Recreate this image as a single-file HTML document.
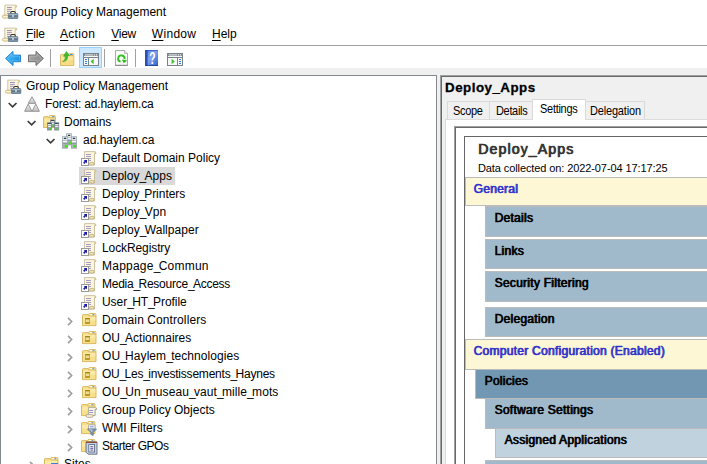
<!DOCTYPE html>
<html><head><meta charset="utf-8">
<style>
*{box-sizing:border-box;margin:0;padding:0}
html,body{width:707px;height:464px;overflow:hidden;background:#fff}
body{font-family:"Liberation Sans",sans-serif;font-size:12px;color:#000;position:relative}
.abs{position:absolute}
svg{overflow:visible}
.t{position:absolute;white-space:nowrap;line-height:18px;height:18px}
.menu{top:25px}
.menu u{text-decoration:underline;text-underline-offset:1.6px;text-decoration-thickness:1px}
.sel{left:79px;top:167px;width:96px;height:18px;background:#d9d9d9}
.us{letter-spacing:-1.7px}
.fb{font-weight:400;text-shadow:0.7px 0 0 currentColor;-webkit-text-stroke:0.35px currentColor;letter-spacing:.27px}
.band{position:absolute;border:1px solid #bbb}
.tab{position:absolute;background:#f0f0f0;border:1px solid #d9d9d9;border-bottom:none}
.sep{position:absolute;top:49px;width:1px;height:18px;background:#a0a0a0}
</style></head><body>
<svg class="abs" style="left:2px;top:4px" width="16" height="15" viewBox="0 0 16 15" >
<path d="M2.8 1.1H12.8Q15.1 .7 14.8 3H13.1V11.6H2.8Z" fill="#fdf6dc" stroke="#c2b795" stroke-width=".8"/>
<path d="M13.1 1.4Q14.7 1.2 14.5 2.8H13.1Z" fill="#d9c478"/>
<path d="M5 3.5H9.9M5 5.4H9.9M5 7.3H8.4M5 9.3H7" stroke="#9488bc" stroke-width=".9"/>
<rect x=".4" y="11.2" width="6.6" height="2.9" rx="1.4" fill="#f6e9b2" stroke="#c4b070" stroke-width=".8"/>
<path d="M1.4 12.6H6" stroke="#fffbe8" stroke-width=".8"/>
<path d="M8.7 9.7V8.7Q8.7 7.5 9.9 7.5H12.1Q13.3 7.5 13.3 8.7V9.7" fill="none" stroke="#2b2b2b" stroke-width="1.1"/>
<rect x="6.4" y="9.6" width="9.4" height="4.9" rx=".5" fill="#7f95a8" stroke="#5d7488" stroke-width=".8"/>
<rect x="6.8" y="10" width="8.6" height="1.2" fill="#a3b6c4"/>
<rect x="6.8" y="11.6" width="8.6" height="1" fill="#4d6072"/>
<rect x="10.4" y="10.8" width="1.2" height="2.2" fill="#f4f6f7"/>
</svg>
<div class="t" style="left:24px;top:3px">Group Policy Management</div>
<svg class="abs" style="left:2px;top:27px" width="16" height="15" viewBox="0 0 16 15" >
<path d="M2.8 1.1H12.8Q15.1 .7 14.8 3H13.1V11.6H2.8Z" fill="#fdf6dc" stroke="#c2b795" stroke-width=".8"/>
<path d="M13.1 1.4Q14.7 1.2 14.5 2.8H13.1Z" fill="#d9c478"/>
<path d="M5 3.5H9.9M5 5.4H9.9M5 7.3H8.4M5 9.3H7" stroke="#9488bc" stroke-width=".9"/>
<rect x=".4" y="11.2" width="6.6" height="2.9" rx="1.4" fill="#f6e9b2" stroke="#c4b070" stroke-width=".8"/>
<path d="M1.4 12.6H6" stroke="#fffbe8" stroke-width=".8"/>
<path d="M8.7 9.7V8.7Q8.7 7.5 9.9 7.5H12.1Q13.3 7.5 13.3 8.7V9.7" fill="none" stroke="#2b2b2b" stroke-width="1.1"/>
<rect x="6.4" y="9.6" width="9.4" height="4.9" rx=".5" fill="#7f95a8" stroke="#5d7488" stroke-width=".8"/>
<rect x="6.8" y="10" width="8.6" height="1.2" fill="#a3b6c4"/>
<rect x="6.8" y="11.6" width="8.6" height="1" fill="#4d6072"/>
<rect x="10.4" y="10.8" width="1.2" height="2.2" fill="#f4f6f7"/>
</svg>
<div class="t menu" style="left:26px;letter-spacing:-0.15px"><u>F</u>ile</div>
<div class="t menu" style="left:60px;letter-spacing:0.3px"><u>A</u>ction</div>
<div class="t menu" style="left:111.3px;letter-spacing:-0.3px"><u>V</u>iew</div>
<div class="t menu" style="left:151.8px;letter-spacing:0.3px"><u>W</u>indow</div>
<div class="t menu" style="left:212px;letter-spacing:0px"><u>H</u>elp</div>
<div class="abs" style="left:0;top:45px;width:707px;height:1px;background:#a0a0a0"></div>
<div class="abs" style="left:0;top:68px;width:707px;height:396px;background:#f0f0f0"></div>
<div class="abs" style="left:79px;top:47px;width:23px;height:21px;background:#cce8ff;border:1px solid #99d1ff"></div>
<svg class="abs" style="left:4.5px;top:51px" width="17" height="15" viewBox="0 0 17 15" ><defs><linearGradient id="gb" x1="0" y1="0" x2="1" y2="1"><stop offset="0" stop-color="#5cc4f8"/><stop offset=".5" stop-color="#34a8f0"/><stop offset="1" stop-color="#0c74d4"/></linearGradient></defs>
<path d="M.6 7.4L8 .3V4.1H15.5V10.7H8V14.5Z" fill="url(#gb)" stroke="#2584d4" stroke-width="1" stroke-linejoin="round"/>
<path d="M2.2 7.4L7 2.8V5.1H14.5V9.7H7V12Z" fill="none" stroke="#8ad4fb" stroke-width=".6" opacity=".7"/></svg>
<svg class="abs" style="left:27px;top:51px" width="17" height="15" viewBox="0 0 17 15" ><defs><linearGradient id="gg" x1="0" y1="0" x2="1" y2="1"><stop offset="0" stop-color="#b8b8b8"/><stop offset=".5" stop-color="#969696"/><stop offset="1" stop-color="#8c8c8c"/></linearGradient></defs>
<path d="M16.4 7.4L9 .3V4.1H1.5V10.7H9V14.5Z" fill="url(#gg)" stroke="#6c6c6c" stroke-width="1" stroke-linejoin="round"/>
<path d="M14.8 7.4L10 2.8V5.1H2.5V9.7H10V12Z" fill="none" stroke="#c8c8c8" stroke-width=".6" opacity=".7"/></svg>
<div class="sep" style="left:50px"></div>
<svg class="abs" style="left:60px;top:51px" width="15" height="15" viewBox="0 0 15 15" ><path d="M8.5 3.2Q8.5 2.4 9.4 2.4H12.8Q13.7 2.4 13.7 3.2V5H8.5Z" fill="#fbe9a7" stroke="#d9b75a" stroke-width=".8"/>
<rect x="10" y="3" width="2.6" height="1" fill="#3b8be6"/>
<path d="M.5 4.2Q.5 3.4 1.4 3.4H6.6L7.8 4.6H13Q13.8 4.6 13.8 5.4V14.5H.5Z" fill="#f7dc85" stroke="#d3ae4e" stroke-width=".8"/>
<path d="M1.2 5.4H13.2V9H1.2Z" fill="#fbe9a9" opacity=".7"/>
<path d="M2.6 10.6Q5.6 9.6 5.4 5.2H3.6L6.4 .6L9.4 4.6H7.6Q8 10.4 2.6 10.6Z" fill="#3fc02a" stroke="#2e9a1e" stroke-width=".6" stroke-linejoin="round"/></svg>
<svg class="abs" style="left:83px;top:53px" width="16" height="13" viewBox="0 0 16 13" ><rect x=".5" y=".5" width="15" height="12" fill="#f6f7f8" stroke="#7a828a" stroke-width="1"/>
<rect x="1" y="1" width="14" height="2" fill="#8a9198"/>
<rect x="11" y="1.4" width="1" height="1" fill="#fff"/><rect x="13" y="1.4" width="1" height="1" fill="#fff"/>
<rect x="2" y="1.4" width="8" height="1" fill="#dfe3e6"/>
<path d="M.5 4.5H15.5M5.5 4.5V12.5" stroke="#7a828a" stroke-width="1"/>
<path d="M2 6.5H4M2 8.5H4M2 10.5H4" stroke="#2f7fd8" stroke-width="1"/>
<path d="M10.6 5.8V11.2L7.6 8.5Z" fill="#3fc02a"/></svg>
<div class="sep" style="left:104px"></div>
<svg class="abs" style="left:115px;top:50px" width="13" height="16" viewBox="0 0 13 16" ><path d="M.5 .5H9.6L12.5 3.4V15.3H.5Z" fill="#fcfcfc" stroke="#9e9e9e" stroke-width=".9"/>
<path d="M.3 15.4H12.7" stroke="#7c7c7c" stroke-width=".8"/>
<path d="M9.6 .5V3.4H12.5" fill="#f0f0f0" stroke="#a8a8a8" stroke-width=".8"/>
<path d="M5.6 11.7A3.2 3.2 0 1 1 9.5 9.2" fill="none" stroke="#35c022" stroke-width="1.9"/>
<path d="M6.9 9.6L12.2 10.4L8.7 13.3Z" fill="#2eb81e"/></svg>
<div class="sep" style="left:135px"></div>
<svg class="abs" style="left:145px;top:50px" width="13" height="16" viewBox="0 0 13 16" ><defs><linearGradient id="gh" x1="0" y1="0" x2="1" y2="1"><stop offset="0" stop-color="#4a7ade"/><stop offset=".45" stop-color="#7ea4ee"/><stop offset="1" stop-color="#2f5cc4"/></linearGradient></defs>
<rect x="0" y="0" width="13" height="16" fill="url(#gh)"/><rect x="0" y="0" width="2.6" height="16" fill="#2c50b8"/>
<rect x="0" y="15.2" width="13" height=".8" fill="#24408c"/><rect x="0" y="0" width="13" height=".7" fill="#2c50b8"/>
<text transform="translate(7.5 13.6) scale(.62 1)" text-anchor="middle" font-family="Liberation Sans, sans-serif" font-weight="700" font-size="16.6" fill="#fff">?</text></svg>
<svg class="abs" style="left:167px;top:53px" width="16" height="13" viewBox="0 0 16 13" ><rect x=".5" y=".5" width="15" height="12" fill="#f6f7f8" stroke="#7a828a" stroke-width="1"/>
<rect x="1" y="1" width="14" height="2" fill="#8a9198"/>
<rect x="11" y="1.4" width="1" height="1" fill="#fff"/><rect x="13" y="1.4" width="1" height="1" fill="#fff"/>
<rect x="2" y="1.4" width="8" height="1" fill="#dfe3e6"/>
<path d="M.5 4.5H15.5M10.5 4.5V12.5" stroke="#7a828a" stroke-width="1"/>
<path d="M12 6.5H14M12 8.5H14M12 10.5H14" stroke="#2f7fd8" stroke-width="1"/>
<path d="M4.6 5.8V11.2L7.8 8.5Z" fill="#3fc02a"/></svg>
<div class="abs" style="left:0px;top:75px;width:437px;height:395px;background:#fff;border:1px solid #828790"></div>
<div class="abs sel"></div>
<svg class="abs" style="left:5px;top:79px" width="16" height="15" viewBox="0 0 16 15" >
<path d="M2.8 1.1H12.8Q15.1 .7 14.8 3H13.1V11.6H2.8Z" fill="#fdf6dc" stroke="#c2b795" stroke-width=".8"/>
<path d="M13.1 1.4Q14.7 1.2 14.5 2.8H13.1Z" fill="#d9c478"/>
<path d="M5 3.5H9.9M5 5.4H9.9M5 7.3H8.4M5 9.3H7" stroke="#9488bc" stroke-width=".9"/>
<rect x=".4" y="11.2" width="6.6" height="2.9" rx="1.4" fill="#f6e9b2" stroke="#c4b070" stroke-width=".8"/>
<path d="M1.4 12.6H6" stroke="#fffbe8" stroke-width=".8"/>
<path d="M8.7 9.7V8.7Q8.7 7.5 9.9 7.5H12.1Q13.3 7.5 13.3 8.7V9.7" fill="none" stroke="#2b2b2b" stroke-width="1.1"/>
<rect x="6.4" y="9.6" width="9.4" height="4.9" rx=".5" fill="#7f95a8" stroke="#5d7488" stroke-width=".8"/>
<rect x="6.8" y="10" width="8.6" height="1.2" fill="#a3b6c4"/>
<rect x="6.8" y="11.6" width="8.6" height="1" fill="#4d6072"/>
<rect x="10.4" y="10.8" width="1.2" height="2.2" fill="#f4f6f7"/>
</svg>
<div class="t" style="left:26px;top:77px">Group Policy Management</div>
<svg class="abs" style="left:24px;top:96px" width="16" height="16" viewBox="0 0 16 16" ><defs><linearGradient id="gt" x1="0" y1="0" x2="0" y2="1"><stop offset="0" stop-color="#f4f4f4"/><stop offset="1" stop-color="#bcbcbc"/></linearGradient></defs>
<path d="M8 .7L11.8 7.4H4.2Z" fill="url(#gt)" stroke="#8e8e8e" stroke-width=".9" stroke-linejoin="round"/>
<path d="M4.2 8L7.9 15.3H.6Z" fill="url(#gt)" stroke="#8e8e8e" stroke-width=".9" stroke-linejoin="round"/>
<path d="M11.8 8L15.4 15.3H8.1Z" fill="url(#gt)" stroke="#8e8e8e" stroke-width=".9" stroke-linejoin="round"/>
</svg>
<svg class="abs" style="left:7.5px;top:101.6px" width="10" height="7" viewBox="0 0 10 7" ><path d="M.7 1L4.6 4.9L8.5 1" fill="none" stroke="#3c3c3c" stroke-width="1.7"/></svg>
<div class="t" style="left:45px;top:95px;letter-spacing:-0.18px">Forest: ad.haylem.ca</div>
<svg class="abs" style="left:43px;top:114.5px" width="16" height="16" viewBox="0 0 16 16" ><path d="M6 1.2Q6 .5 7 .5H11.4Q12.4 .5 12.4 1.4V4H6Z" fill="#fbe9a7" stroke="#d9b75a" stroke-width=".8"/>
<rect x="9" y="1.2" width="2.4" height="1.1" fill="#3b8be6"/>
<path d="M.5 2.4Q.5 1.6 1.4 1.6H5L6.2 2.8H11.6Q12.4 2.8 12.4 3.6V12.5H.5Z" fill="#f7dc85" stroke="#d3ae4e" stroke-width=".8"/>
<path d="M1.2 3.6H11.8V8H1.2Z" fill="#fbe9a9" opacity=".8"/><rect x="7.6" y="4.8999999999999995" width="3.9" height="7.0" fill="#8f9ba6" stroke="#76828c" stroke-width=".6"/>
<rect x="7.8" y="5.0" width="3.5" height="1" fill="#33485a"/>
<rect x="8.2" y="6.199999999999999" width="2.7" height="1.1" fill="#f2f5f7"/>
<rect x="8.2" y="8.1" width="2.7" height="1.1" fill="#eef1f4"/>
<rect x="9.3" y="9.7" width="1.6" height="1.6" fill="#3fe01c"/><rect x="4.3999999999999995" y="7.8" width="4.2" height="7.300000000000001" fill="#8f9ba6" stroke="#76828c" stroke-width=".6"/>
<rect x="4.6" y="7.9" width="3.8" height="1" fill="#33485a"/>
<rect x="5.0" y="9.1" width="3.0" height="1.1" fill="#f2f5f7"/>
<rect x="5.0" y="11.0" width="3.0" height="1.1" fill="#eef1f4"/>
<rect x="6.399999999999999" y="12.9" width="1.6" height="1.6" fill="#3fe01c"/><rect x="11.600000000000001" y="7.8" width="4.2" height="7.300000000000001" fill="#8f9ba6" stroke="#76828c" stroke-width=".6"/>
<rect x="11.8" y="7.9" width="3.8" height="1" fill="#33485a"/>
<rect x="12.200000000000001" y="9.1" width="3.0" height="1.1" fill="#f2f5f7"/>
<rect x="12.200000000000001" y="11.0" width="3.0" height="1.1" fill="#eef1f4"/>
<rect x="13.600000000000001" y="12.9" width="1.6" height="1.6" fill="#3fe01c"/></svg>
<svg class="abs" style="left:26.5px;top:119.6px" width="10" height="7" viewBox="0 0 10 7" ><path d="M.7 1L4.6 4.9L8.5 1" fill="none" stroke="#3c3c3c" stroke-width="1.7"/></svg>
<div class="t" style="left:64px;top:113px">Domains</div>
<svg class="abs" style="left:62px;top:132.5px" width="16" height="16" viewBox="0 0 16 16" ><rect x="4.5" y="0.8" width="5.2" height="11.200000000000001" fill="#a9b3bb" stroke="#8a949d" stroke-width=".6"/>
<rect x="4.9" y="1.2" width="4.4" height="2.8" fill="#e4e9ed"/>
<rect x="5.9" y="1.8" width="2.4" height="1.2" rx=".6" fill="#1d3b4c"/>
<rect x="5.1000000000000005" y="4.8" width="4.0" height="1.5" fill="#f6f8fa"/>
<rect x="5.1000000000000005" y="7.1" width="4.0" height=".7" fill="#848f98"/><rect x="6.6" y="8.700000000000001" width="2.4" height="2.6" fill="#46dc1c"/><rect x="0.4" y="3.8" width="5.4" height="11.4" fill="#a9b3bb" stroke="#8a949d" stroke-width=".6"/>
<rect x="0.7999999999999999" y="4.2" width="4.6" height="2.8" fill="#e4e9ed"/>
<rect x="1.8" y="4.8" width="2.6" height="1.2" rx=".6" fill="#1d3b4c"/>
<rect x="1.0" y="7.8" width="4.2" height="1.5" fill="#f6f8fa"/>
<rect x="1.0" y="10.1" width="4.2" height=".7" fill="#848f98"/><rect x="2.6999999999999997" y="11.9" width="2.4" height="2.6" fill="#46dc1c"/><rect x="9.3" y="3.8" width="5.4" height="11.4" fill="#a9b3bb" stroke="#8a949d" stroke-width=".6"/>
<rect x="9.7" y="4.2" width="4.6" height="2.8" fill="#e4e9ed"/>
<rect x="10.7" y="4.8" width="2.6" height="1.2" rx=".6" fill="#1d3b4c"/>
<rect x="9.9" y="7.8" width="4.2" height="1.5" fill="#f6f8fa"/>
<rect x="9.9" y="10.1" width="4.2" height=".7" fill="#848f98"/><rect x="11.6" y="11.9" width="2.4" height="2.6" fill="#46dc1c"/></svg>
<svg class="abs" style="left:45.5px;top:137.6px" width="10" height="7" viewBox="0 0 10 7" ><path d="M.7 1L4.6 4.9L8.5 1" fill="none" stroke="#3c3c3c" stroke-width="1.7"/></svg>
<div class="t" style="left:83px;top:131px">ad.haylem.ca</div>
<svg class="abs" style="left:81px;top:150px" width="16" height="16" viewBox="0 0 16 16" >
<path d="M3.5 1.6H13Q15.3 1.2 14.9 3.7H13.5V15H7" fill="#fdf6dc" stroke="#bfb493" stroke-width=".8"/>
<path d="M3.5 1.6V9" stroke="#bfb493" stroke-width=".8"/>
<path d="M13.5 1.9Q14.9 1.8 14.6 3.4H13.5Z" fill="#d4bd6c"/>
<path d="M5 4.5H10M5 6.5H10M5 8.5H10M8 10.5H10" stroke="#9890c4" stroke-width=".9"/>
<rect x="8.6" y="12.4" width="4.4" height="2.7" rx="1.2" fill="#f3e4ac" stroke="#b9a772" stroke-width=".8"/>
<rect x=".5" y="8.5" width="7" height="7" fill="#fff" stroke="#9a9a9a" stroke-width="1"/>
<path d="M2.6 10H6V13.4L4.9 12.3L3.3 13.9L2.1 12.7L3.7 11.1Z" fill="#1f1f9e"/>
</svg>
<div class="t" style="left:102px;top:149px">Default Domain Policy</div>
<svg class="abs" style="left:81px;top:168px" width="16" height="16" viewBox="0 0 16 16" >
<path d="M3.5 1.6H13Q15.3 1.2 14.9 3.7H13.5V15H7" fill="#fdf6dc" stroke="#bfb493" stroke-width=".8"/>
<path d="M3.5 1.6V9" stroke="#bfb493" stroke-width=".8"/>
<path d="M13.5 1.9Q14.9 1.8 14.6 3.4H13.5Z" fill="#d4bd6c"/>
<path d="M5 4.5H10M5 6.5H10M5 8.5H10M8 10.5H10" stroke="#9890c4" stroke-width=".9"/>
<rect x="8.6" y="12.4" width="4.4" height="2.7" rx="1.2" fill="#f3e4ac" stroke="#b9a772" stroke-width=".8"/>
<rect x=".5" y="8.5" width="7" height="7" fill="#fff" stroke="#9a9a9a" stroke-width="1"/>
<path d="M2.6 10H6V13.4L4.9 12.3L3.3 13.9L2.1 12.7L3.7 11.1Z" fill="#1f1f9e"/>
</svg>
<div class="t" style="left:102px;top:167px;letter-spacing:0.02px">Deploy<span class="us">_</span>Apps</div>
<svg class="abs" style="left:81px;top:186px" width="16" height="16" viewBox="0 0 16 16" >
<path d="M3.5 1.6H13Q15.3 1.2 14.9 3.7H13.5V15H7" fill="#fdf6dc" stroke="#bfb493" stroke-width=".8"/>
<path d="M3.5 1.6V9" stroke="#bfb493" stroke-width=".8"/>
<path d="M13.5 1.9Q14.9 1.8 14.6 3.4H13.5Z" fill="#d4bd6c"/>
<path d="M5 4.5H10M5 6.5H10M5 8.5H10M8 10.5H10" stroke="#9890c4" stroke-width=".9"/>
<rect x="8.6" y="12.4" width="4.4" height="2.7" rx="1.2" fill="#f3e4ac" stroke="#b9a772" stroke-width=".8"/>
<rect x=".5" y="8.5" width="7" height="7" fill="#fff" stroke="#9a9a9a" stroke-width="1"/>
<path d="M2.6 10H6V13.4L4.9 12.3L3.3 13.9L2.1 12.7L3.7 11.1Z" fill="#1f1f9e"/>
</svg>
<div class="t" style="left:102px;top:185px;letter-spacing:-0.03px">Deploy<span class="us">_</span>Printers</div>
<svg class="abs" style="left:81px;top:204px" width="16" height="16" viewBox="0 0 16 16" >
<path d="M3.5 1.6H13Q15.3 1.2 14.9 3.7H13.5V15H7" fill="#fdf6dc" stroke="#bfb493" stroke-width=".8"/>
<path d="M3.5 1.6V9" stroke="#bfb493" stroke-width=".8"/>
<path d="M13.5 1.9Q14.9 1.8 14.6 3.4H13.5Z" fill="#d4bd6c"/>
<path d="M5 4.5H10M5 6.5H10M5 8.5H10M8 10.5H10" stroke="#9890c4" stroke-width=".9"/>
<rect x="8.6" y="12.4" width="4.4" height="2.7" rx="1.2" fill="#f3e4ac" stroke="#b9a772" stroke-width=".8"/>
<rect x=".5" y="8.5" width="7" height="7" fill="#fff" stroke="#9a9a9a" stroke-width="1"/>
<path d="M2.6 10H6V13.4L4.9 12.3L3.3 13.9L2.1 12.7L3.7 11.1Z" fill="#1f1f9e"/>
</svg>
<div class="t" style="left:102px;top:203px;letter-spacing:0.06px">Deploy<span class="us">_</span>Vpn</div>
<svg class="abs" style="left:81px;top:222px" width="16" height="16" viewBox="0 0 16 16" >
<path d="M3.5 1.6H13Q15.3 1.2 14.9 3.7H13.5V15H7" fill="#fdf6dc" stroke="#bfb493" stroke-width=".8"/>
<path d="M3.5 1.6V9" stroke="#bfb493" stroke-width=".8"/>
<path d="M13.5 1.9Q14.9 1.8 14.6 3.4H13.5Z" fill="#d4bd6c"/>
<path d="M5 4.5H10M5 6.5H10M5 8.5H10M8 10.5H10" stroke="#9890c4" stroke-width=".9"/>
<rect x="8.6" y="12.4" width="4.4" height="2.7" rx="1.2" fill="#f3e4ac" stroke="#b9a772" stroke-width=".8"/>
<rect x=".5" y="8.5" width="7" height="7" fill="#fff" stroke="#9a9a9a" stroke-width="1"/>
<path d="M2.6 10H6V13.4L4.9 12.3L3.3 13.9L2.1 12.7L3.7 11.1Z" fill="#1f1f9e"/>
</svg>
<div class="t" style="left:102px;top:221px;letter-spacing:0.06px">Deploy<span class="us">_</span>Wallpaper</div>
<svg class="abs" style="left:81px;top:240px" width="16" height="16" viewBox="0 0 16 16" >
<path d="M3.5 1.6H13Q15.3 1.2 14.9 3.7H13.5V15H7" fill="#fdf6dc" stroke="#bfb493" stroke-width=".8"/>
<path d="M3.5 1.6V9" stroke="#bfb493" stroke-width=".8"/>
<path d="M13.5 1.9Q14.9 1.8 14.6 3.4H13.5Z" fill="#d4bd6c"/>
<path d="M5 4.5H10M5 6.5H10M5 8.5H10M8 10.5H10" stroke="#9890c4" stroke-width=".9"/>
<rect x="8.6" y="12.4" width="4.4" height="2.7" rx="1.2" fill="#f3e4ac" stroke="#b9a772" stroke-width=".8"/>
<rect x=".5" y="8.5" width="7" height="7" fill="#fff" stroke="#9a9a9a" stroke-width="1"/>
<path d="M2.6 10H6V13.4L4.9 12.3L3.3 13.9L2.1 12.7L3.7 11.1Z" fill="#1f1f9e"/>
</svg>
<div class="t" style="left:102px;top:239px;letter-spacing:-0.1px">LockRegistry</div>
<svg class="abs" style="left:81px;top:258px" width="16" height="16" viewBox="0 0 16 16" >
<path d="M3.5 1.6H13Q15.3 1.2 14.9 3.7H13.5V15H7" fill="#fdf6dc" stroke="#bfb493" stroke-width=".8"/>
<path d="M3.5 1.6V9" stroke="#bfb493" stroke-width=".8"/>
<path d="M13.5 1.9Q14.9 1.8 14.6 3.4H13.5Z" fill="#d4bd6c"/>
<path d="M5 4.5H10M5 6.5H10M5 8.5H10M8 10.5H10" stroke="#9890c4" stroke-width=".9"/>
<rect x="8.6" y="12.4" width="4.4" height="2.7" rx="1.2" fill="#f3e4ac" stroke="#b9a772" stroke-width=".8"/>
<rect x=".5" y="8.5" width="7" height="7" fill="#fff" stroke="#9a9a9a" stroke-width="1"/>
<path d="M2.6 10H6V13.4L4.9 12.3L3.3 13.9L2.1 12.7L3.7 11.1Z" fill="#1f1f9e"/>
</svg>
<div class="t" style="left:102px;top:257px;letter-spacing:0.23px">Mappage<span class="us">_</span>Commun</div>
<svg class="abs" style="left:81px;top:276px" width="16" height="16" viewBox="0 0 16 16" >
<path d="M3.5 1.6H13Q15.3 1.2 14.9 3.7H13.5V15H7" fill="#fdf6dc" stroke="#bfb493" stroke-width=".8"/>
<path d="M3.5 1.6V9" stroke="#bfb493" stroke-width=".8"/>
<path d="M13.5 1.9Q14.9 1.8 14.6 3.4H13.5Z" fill="#d4bd6c"/>
<path d="M5 4.5H10M5 6.5H10M5 8.5H10M8 10.5H10" stroke="#9890c4" stroke-width=".9"/>
<rect x="8.6" y="12.4" width="4.4" height="2.7" rx="1.2" fill="#f3e4ac" stroke="#b9a772" stroke-width=".8"/>
<rect x=".5" y="8.5" width="7" height="7" fill="#fff" stroke="#9a9a9a" stroke-width="1"/>
<path d="M2.6 10H6V13.4L4.9 12.3L3.3 13.9L2.1 12.7L3.7 11.1Z" fill="#1f1f9e"/>
</svg>
<div class="t" style="left:102px;top:275px;letter-spacing:-0.24px">Media<span class="us">_</span>Resource<span class="us">_</span>Access</div>
<svg class="abs" style="left:81px;top:294px" width="16" height="16" viewBox="0 0 16 16" >
<path d="M3.5 1.6H13Q15.3 1.2 14.9 3.7H13.5V15H7" fill="#fdf6dc" stroke="#bfb493" stroke-width=".8"/>
<path d="M3.5 1.6V9" stroke="#bfb493" stroke-width=".8"/>
<path d="M13.5 1.9Q14.9 1.8 14.6 3.4H13.5Z" fill="#d4bd6c"/>
<path d="M5 4.5H10M5 6.5H10M5 8.5H10M8 10.5H10" stroke="#9890c4" stroke-width=".9"/>
<rect x="8.6" y="12.4" width="4.4" height="2.7" rx="1.2" fill="#f3e4ac" stroke="#b9a772" stroke-width=".8"/>
<rect x=".5" y="8.5" width="7" height="7" fill="#fff" stroke="#9a9a9a" stroke-width="1"/>
<path d="M2.6 10H6V13.4L4.9 12.3L3.3 13.9L2.1 12.7L3.7 11.1Z" fill="#1f1f9e"/>
</svg>
<div class="t" style="left:102px;top:293px;letter-spacing:-0.05px">User<span class="us">_</span>HT<span class="us">_</span>Profile</div>
<svg class="abs" style="left:82px;top:313px" width="16" height="14" viewBox="0 0 16 14" >
<path d="M6.7 1.4Q6.7 .5 7.7 .5H12.9Q13.9 .5 13.9 1.4V3.6H6.7Z" fill="#fbe9a7" stroke="#d6b04e" stroke-width=".8"/>
<rect x="8.2" y="1.2" width="2.2" height="1.1" fill="#fffdf4"/><rect x="10.4" y="1.2" width="2" height="1.1" rx=".4" fill="#3b8be6"/>
<path d="M.5 2.5Q.5 1.6 1.4 1.6H5.9L7.3 3H13.2Q14 3 14 3.8V12.6H.5Z" fill="#f8df8c" stroke="#d0a947" stroke-width=".8"/>
<path d="M1.2 3.8H13.3V7.6H1.2Z" fill="#fcecb0" opacity=".75"/>
<rect x="3" y="5" width="5" height="5.8" fill="#c6a52e"/><rect x="3" y="5" width="5" height="1" fill="#a4861a"/>
<rect x="3.8" y="6.6" width="3.4" height="2.4" fill="#f4e6a6" opacity=".85"/><rect x="3.4" y="9.4" width="4.2" height="1.4" fill="#a2820f" opacity=".6"/></svg>
<svg class="abs" style="left:66.7px;top:316.9px" width="7" height="10" viewBox="0 0 7 10" ><path d="M1 .9L4.6 4.5L1 8.1" fill="none" stroke="#a0a0a0" stroke-width="1.7"/></svg>
<div class="t" style="left:102px;top:311px;letter-spacing:0.09px">Domain Controllers</div>
<svg class="abs" style="left:82px;top:331px" width="16" height="14" viewBox="0 0 16 14" >
<path d="M6.7 1.4Q6.7 .5 7.7 .5H12.9Q13.9 .5 13.9 1.4V3.6H6.7Z" fill="#fbe9a7" stroke="#d6b04e" stroke-width=".8"/>
<rect x="8.2" y="1.2" width="2.2" height="1.1" fill="#fffdf4"/><rect x="10.4" y="1.2" width="2" height="1.1" rx=".4" fill="#3b8be6"/>
<path d="M.5 2.5Q.5 1.6 1.4 1.6H5.9L7.3 3H13.2Q14 3 14 3.8V12.6H.5Z" fill="#f8df8c" stroke="#d0a947" stroke-width=".8"/>
<path d="M1.2 3.8H13.3V7.6H1.2Z" fill="#fcecb0" opacity=".75"/>
<rect x="3" y="5" width="5" height="5.8" fill="#c6a52e"/><rect x="3" y="5" width="5" height="1" fill="#a4861a"/>
<rect x="3.8" y="6.6" width="3.4" height="2.4" fill="#f4e6a6" opacity=".85"/><rect x="3.4" y="9.4" width="4.2" height="1.4" fill="#a2820f" opacity=".6"/></svg>
<svg class="abs" style="left:66.7px;top:334.9px" width="7" height="10" viewBox="0 0 7 10" ><path d="M1 .9L4.6 4.5L1 8.1" fill="none" stroke="#a0a0a0" stroke-width="1.7"/></svg>
<div class="t" style="left:102px;top:329px;letter-spacing:0.02px">OU<span class="us">_</span>Actionnaires</div>
<svg class="abs" style="left:82px;top:349px" width="16" height="14" viewBox="0 0 16 14" >
<path d="M6.7 1.4Q6.7 .5 7.7 .5H12.9Q13.9 .5 13.9 1.4V3.6H6.7Z" fill="#fbe9a7" stroke="#d6b04e" stroke-width=".8"/>
<rect x="8.2" y="1.2" width="2.2" height="1.1" fill="#fffdf4"/><rect x="10.4" y="1.2" width="2" height="1.1" rx=".4" fill="#3b8be6"/>
<path d="M.5 2.5Q.5 1.6 1.4 1.6H5.9L7.3 3H13.2Q14 3 14 3.8V12.6H.5Z" fill="#f8df8c" stroke="#d0a947" stroke-width=".8"/>
<path d="M1.2 3.8H13.3V7.6H1.2Z" fill="#fcecb0" opacity=".75"/>
<rect x="3" y="5" width="5" height="5.8" fill="#c6a52e"/><rect x="3" y="5" width="5" height="1" fill="#a4861a"/>
<rect x="3.8" y="6.6" width="3.4" height="2.4" fill="#f4e6a6" opacity=".85"/><rect x="3.4" y="9.4" width="4.2" height="1.4" fill="#a2820f" opacity=".6"/></svg>
<svg class="abs" style="left:66.7px;top:352.9px" width="7" height="10" viewBox="0 0 7 10" ><path d="M1 .9L4.6 4.5L1 8.1" fill="none" stroke="#a0a0a0" stroke-width="1.7"/></svg>
<div class="t" style="left:102px;top:347px;letter-spacing:0.06px">OU<span class="us">_</span>Haylem<span class="us">_</span>technologies</div>
<svg class="abs" style="left:82px;top:367px" width="16" height="14" viewBox="0 0 16 14" >
<path d="M6.7 1.4Q6.7 .5 7.7 .5H12.9Q13.9 .5 13.9 1.4V3.6H6.7Z" fill="#fbe9a7" stroke="#d6b04e" stroke-width=".8"/>
<rect x="8.2" y="1.2" width="2.2" height="1.1" fill="#fffdf4"/><rect x="10.4" y="1.2" width="2" height="1.1" rx=".4" fill="#3b8be6"/>
<path d="M.5 2.5Q.5 1.6 1.4 1.6H5.9L7.3 3H13.2Q14 3 14 3.8V12.6H.5Z" fill="#f8df8c" stroke="#d0a947" stroke-width=".8"/>
<path d="M1.2 3.8H13.3V7.6H1.2Z" fill="#fcecb0" opacity=".75"/>
<rect x="3" y="5" width="5" height="5.8" fill="#c6a52e"/><rect x="3" y="5" width="5" height="1" fill="#a4861a"/>
<rect x="3.8" y="6.6" width="3.4" height="2.4" fill="#f4e6a6" opacity=".85"/><rect x="3.4" y="9.4" width="4.2" height="1.4" fill="#a2820f" opacity=".6"/></svg>
<svg class="abs" style="left:66.7px;top:370.9px" width="7" height="10" viewBox="0 0 7 10" ><path d="M1 .9L4.6 4.5L1 8.1" fill="none" stroke="#a0a0a0" stroke-width="1.7"/></svg>
<div class="t" style="left:102px;top:365px;letter-spacing:-0.21px">OU<span class="us">_</span>Les<span class="us">_</span>investissements<span class="us">_</span>Haynes</div>
<svg class="abs" style="left:82px;top:385px" width="16" height="14" viewBox="0 0 16 14" >
<path d="M6.7 1.4Q6.7 .5 7.7 .5H12.9Q13.9 .5 13.9 1.4V3.6H6.7Z" fill="#fbe9a7" stroke="#d6b04e" stroke-width=".8"/>
<rect x="8.2" y="1.2" width="2.2" height="1.1" fill="#fffdf4"/><rect x="10.4" y="1.2" width="2" height="1.1" rx=".4" fill="#3b8be6"/>
<path d="M.5 2.5Q.5 1.6 1.4 1.6H5.9L7.3 3H13.2Q14 3 14 3.8V12.6H.5Z" fill="#f8df8c" stroke="#d0a947" stroke-width=".8"/>
<path d="M1.2 3.8H13.3V7.6H1.2Z" fill="#fcecb0" opacity=".75"/>
<rect x="3" y="5" width="5" height="5.8" fill="#c6a52e"/><rect x="3" y="5" width="5" height="1" fill="#a4861a"/>
<rect x="3.8" y="6.6" width="3.4" height="2.4" fill="#f4e6a6" opacity=".85"/><rect x="3.4" y="9.4" width="4.2" height="1.4" fill="#a2820f" opacity=".6"/></svg>
<svg class="abs" style="left:66.7px;top:388.9px" width="7" height="10" viewBox="0 0 7 10" ><path d="M1 .9L4.6 4.5L1 8.1" fill="none" stroke="#a0a0a0" stroke-width="1.7"/></svg>
<div class="t" style="left:102px;top:383px;letter-spacing:0.09px">OU<span class="us">_</span>Un<span class="us">_</span>museau<span class="us">_</span>vaut<span class="us">_</span>mille<span class="us">_</span>mots</div>
<svg class="abs" style="left:81px;top:403px" width="16" height="15" viewBox="0 0 16 15" >
<path d="M6.7 1.4Q6.7 .5 7.7 .5H12.9Q13.9 .5 13.9 1.4V3.6H6.7Z" fill="#fbe9a7" stroke="#d6b04e" stroke-width=".8"/>
<rect x="8.2" y="1.2" width="2.2" height="1.1" fill="#fffdf4"/><rect x="10.4" y="1.2" width="2" height="1.1" rx=".4" fill="#3b8be6"/>
<path d="M.5 2.5Q.5 1.6 1.4 1.6H5.9L7.3 3H13.2Q14 3 14 3.8V12.6H.5Z" fill="#f8df8c" stroke="#d0a947" stroke-width=".8"/>
<path d="M1.2 3.8H13.3V7.6H1.2Z" fill="#fcecb0" opacity=".75"/>
<path d="M7.4 4.6H13.8Q16 4.3 15.8 6.4H14V12.4H7.4Z" fill="#fbf8ec" stroke="#a39d8c" stroke-width=".8"/>
<path d="M8.2 7.5H12.2M8.2 9.5H12.2" stroke="#8c84bc" stroke-width=".9"/>
<rect x="5" y="11.6" width="7" height="2.7" rx="1.2" fill="#f7efcf" stroke="#a39d8c" stroke-width=".8"/></svg>
<svg class="abs" style="left:66.7px;top:406.9px" width="7" height="10" viewBox="0 0 7 10" ><path d="M1 .9L4.6 4.5L1 8.1" fill="none" stroke="#a0a0a0" stroke-width="1.7"/></svg>
<div class="t" style="left:102px;top:401px">Group Policy Objects</div>
<svg class="abs" style="left:81px;top:421px" width="16" height="15" viewBox="0 0 16 15" >
<path d="M6.7 1.4Q6.7 .5 7.7 .5H12.9Q13.9 .5 13.9 1.4V3.6H6.7Z" fill="#fbe9a7" stroke="#d6b04e" stroke-width=".8"/>
<rect x="8.2" y="1.2" width="2.2" height="1.1" fill="#fffdf4"/><rect x="10.4" y="1.2" width="2" height="1.1" rx=".4" fill="#3b8be6"/>
<path d="M.5 2.5Q.5 1.6 1.4 1.6H5.9L7.3 3H13.2Q14 3 14 3.8V12.6H.5Z" fill="#f8df8c" stroke="#d0a947" stroke-width=".8"/>
<path d="M1.2 3.8H13.3V7.6H1.2Z" fill="#fcecb0" opacity=".75"/>
<rect x="7.5" y="3.8" width="6.5" height="4.2" rx=".8" fill="#f4f6f8" stroke="#9aa3aa" stroke-width=".8"/>
<path d="M9 5.8H12.5" stroke="#8a84c4" stroke-width="1"/>
<path d="M6.5 8H15.5L12.2 11.5V14.5L9.8 13.2V11.5Z" fill="#7d98b0" stroke="#54708a" stroke-width=".7" stroke-linejoin="round"/>
<path d="M8.2 8.8H11L10.6 11" stroke="#c9d8e4" stroke-width=".8" fill="none"/></svg>
<svg class="abs" style="left:66.7px;top:424.9px" width="7" height="10" viewBox="0 0 7 10" ><path d="M1 .9L4.6 4.5L1 8.1" fill="none" stroke="#a0a0a0" stroke-width="1.7"/></svg>
<div class="t" style="left:102px;top:419px">WMI Filters</div>
<svg class="abs" style="left:81px;top:439px" width="16" height="16" viewBox="0 0 16 16" >
<path d="M6.7 1.4Q6.7 .5 7.7 .5H12.9Q13.9 .5 13.9 1.4V3.6H6.7Z" fill="#fbe9a7" stroke="#d6b04e" stroke-width=".8"/>
<rect x="8.2" y="1.2" width="2.2" height="1.1" fill="#fffdf4"/><rect x="10.4" y="1.2" width="2" height="1.1" rx=".4" fill="#3b8be6"/>
<path d="M.5 2.5Q.5 1.6 1.4 1.6H5.9L7.3 3H13.2Q14 3 14 3.8V12.6H.5Z" fill="#f8df8c" stroke="#d0a947" stroke-width=".8"/>
<path d="M1.2 3.8H13.3V7.6H1.2Z" fill="#fcecb0" opacity=".75"/>
<path d="M5 3H16V15.2H7L5 13.2Z" fill="#c2d2ec" stroke="#666a74" stroke-width=".9"/>
<path d="M5 3.3H16" stroke="#8a4b32" stroke-width="1.3"/>
<rect x="7.8" y="5.6" width="5.8" height="7.4" fill="#eef3fb" stroke="#5a6078" stroke-width=".8"/>
<path d="M9.3 7.7H12.2M9.3 9.4H12.2M9.3 11.1H12.2" stroke="#4a5288" stroke-width=".9"/></svg>
<svg class="abs" style="left:66.7px;top:442.9px" width="7" height="10" viewBox="0 0 7 10" ><path d="M1 .9L4.6 4.5L1 8.1" fill="none" stroke="#a0a0a0" stroke-width="1.7"/></svg>
<div class="t" style="left:102px;top:437px;letter-spacing:-0.46px">Starter GPOs</div>
<svg class="abs" style="left:43.5px;top:457px" width="16" height="14" viewBox="0 0 16 14" >
<path d="M6.7 1.4Q6.7 .5 7.7 .5H12.9Q13.9 .5 13.9 1.4V3.6H6.7Z" fill="#fbe9a7" stroke="#d6b04e" stroke-width=".8"/>
<rect x="8.2" y="1.2" width="2.2" height="1.1" fill="#fffdf4"/><rect x="10.4" y="1.2" width="2" height="1.1" rx=".4" fill="#3b8be6"/>
<path d="M.5 2.5Q.5 1.6 1.4 1.6H5.9L7.3 3H13.2Q14 3 14 3.8V12.6H.5Z" fill="#f8df8c" stroke="#d0a947" stroke-width=".8"/>
<path d="M1.2 3.8H13.3V7.6H1.2Z" fill="#fcecb0" opacity=".75"/>
<rect x="7" y="6" width="7" height="6" fill="#3b7fd6"/></svg>
<svg class="abs" style="left:28.7px;top:460.9px" width="7" height="10" viewBox="0 0 7 10" ><path d="M1 .9L4.6 4.5L1 8.1" fill="none" stroke="#a0a0a0" stroke-width="1.7"/></svg>
<div class="t" style="left:64px;top:455px">Sites</div>
<div class="abs" style="left:440px;top:75px;width:280px;height:400px;background:#f0f0f0;border:2px solid #696969;border-color:#a0a0a0 #fff #fff #a0a0a0"></div>
<div class="abs" style="left:441px;top:76px;width:280px;height:400px;border:1px solid #696969"></div>
<div class="t" style="left:445px;top:79px;font-weight:700;font-size:13.33px;letter-spacing:0.5px;-webkit-text-stroke:.3px #000">Deploy_Apps</div>
<div class="abs" style="left:445px;top:119px;width:270px;height:350px;background:#fff;border:1px solid #dcdcdc"></div>
<div class="tab" style="left:447px;top:101px;width:43px;height:18px"></div>
<div class="tab" style="left:489px;top:101px;width:44px;height:18px"></div>
<div class="tab" style="left:585px;top:101px;width:60px;height:18px"></div>
<div class="tab" style="left:532px;top:99px;width:54px;height:21px;background:#fff"></div>
<div class="t" style="left:453px;top:101.6px;font-size:12.2px;letter-spacing:-0.35px;transform:scaleX(.9);transform-origin:0 0">Scope</div>
<div class="t" style="left:496.3px;top:101.6px;font-size:12.2px;letter-spacing:-0.35px;transform:scaleX(.9);transform-origin:0 0">Details</div>
<div class="t" style="left:539.6px;top:99.6px;font-size:12.2px;letter-spacing:-0.3px;transform:scaleX(.9);transform-origin:0 0">Settings</div>
<div class="t" style="left:590.2px;top:101.6px;font-size:12.2px;letter-spacing:-0.18px;transform:scaleX(.9);transform-origin:0 0">Delegation</div>
<div class="abs" style="left:454px;top:126px;width:260px;height:345px;border:1px solid #a0a0a0;background:#fff"></div>
<div class="abs" style="left:455px;top:127px;width:260px;height:345px;border:1px solid #696969;background:#fff"></div>
<div class="abs" style="left:464px;top:136px;width:250px;height:340px;border:1px solid #666;background:#fff"></div>
<div class="t fb" style="left:478px;top:140px;font-size:14.1px;letter-spacing:1.12px;color:#333">Deploy_Apps</div>
<div class="t" style="left:478px;top:159px;font-size:11px;letter-spacing:-0.1px">Data collected on: 2022-07-04 17:17:25</div>
<div class="band" style="left:465px;top:177px;width:260px;height:29px;background:#fef7d6"></div>
<div class="t fb" style="left:473.4px;top:180px;color:#3333cc">General</div>
<div class="band" style="left:485px;top:206px;width:260px;height:31px;background:#a0bacb"></div>
<div class="t fb" style="left:494.4px;top:209px;color:#000">Details</div>
<div class="band" style="left:485px;top:239px;width:260px;height:30px;background:#a0bacb"></div>
<div class="t fb" style="left:494.4px;top:242px;color:#000">Links</div>
<div class="band" style="left:485px;top:271px;width:260px;height:31px;background:#a0bacb"></div>
<div class="t fb" style="left:494.4px;top:274px;color:#000">Security Filtering</div>
<div class="band" style="left:485px;top:307px;width:260px;height:30px;background:#a0bacb"></div>
<div class="t fb" style="left:494.4px;top:310px;color:#000">Delegation</div>
<div class="band" style="left:465px;top:339px;width:260px;height:31px;background:#fef7d6"></div>
<div class="t fb" style="left:473.4px;top:342px;color:#3333cc">Computer Configuration (Enabled)</div>
<div class="band" style="left:475px;top:369px;width:260px;height:30px;background:#7197b3"></div>
<div class="t fb" style="left:484.4px;top:372px;color:#000">Policies</div>
<div class="band" style="left:485px;top:398px;width:260px;height:31px;background:#a0bacb"></div>
<div class="t fb" style="left:494.4px;top:401px;color:#000">Software Settings</div>
<div class="band" style="left:495px;top:428px;width:260px;height:30px;background:#c0d2de"></div>
<div class="t fb" style="left:504.4px;top:431px;color:#000">Assigned Applications</div>
<div class="band" style="left:485px;top:460px;width:260px;height:30px;background:#a0bacb"></div>
</body></html>
